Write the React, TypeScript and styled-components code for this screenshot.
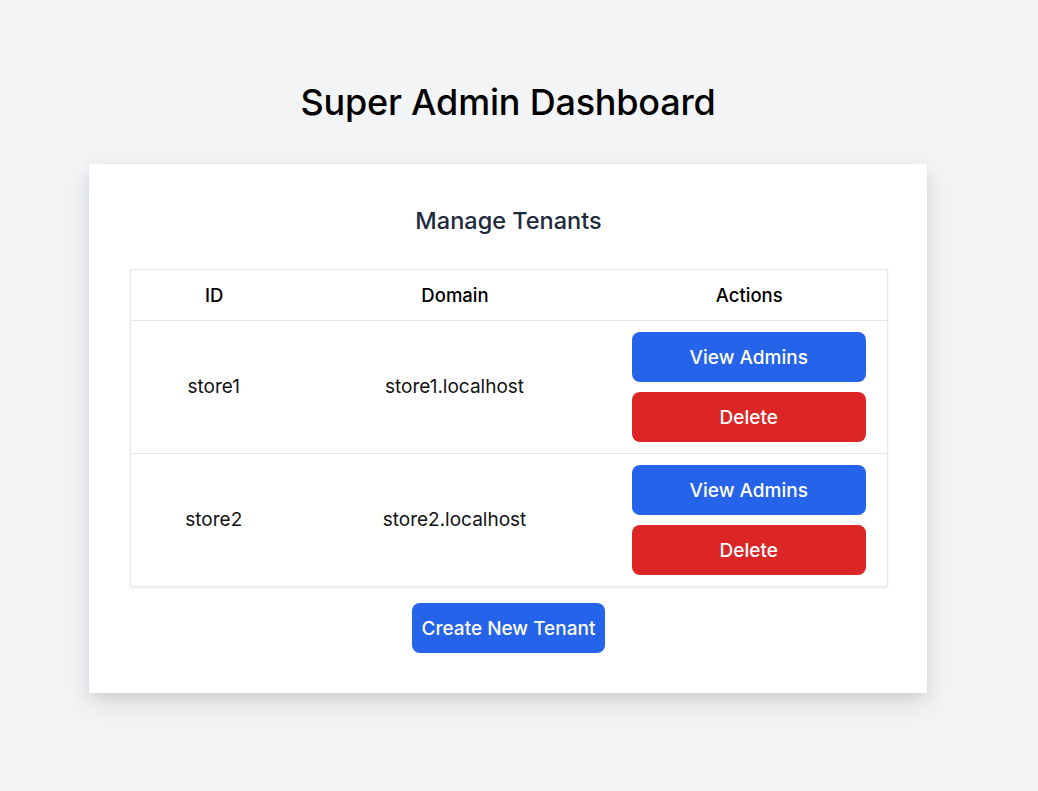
import React, {FC} from 'react';
import styled, {createGlobalStyle} from 'styled-components';

const GlobalStyle = createGlobalStyle`
    html, body {
        margin: 0;
        padding: 0;
        background: #f3f4f6;
        font-family: Inter, "Noto Sans", sans-serif;
    }
`;

const Page = styled.div`
    min-height: 791px;
    display: flex;
    flex-direction: column;
    align-items: center;
    padding: 78px 22px 0 0;
    box-sizing: border-box;
`;

const Title = styled.h1`
    margin: 0 0 38px;
    font-size: 36px;
    font-weight: 500;
    line-height: 48px;
    color: #000;
    letter-spacing: -0.2px;
`;

const Card = styled.div`
    width: 838px;
    box-sizing: border-box;
    background: #fff;
    padding: 40px 40px 40px 41px;
    box-shadow: 0 10px 25px rgba(0, 0, 0, 0.12), 0 4px 10px rgba(0, 0, 0, 0.05);
    display: flex;
    flex-direction: column;
    align-items: center;
`;

const Subtitle = styled.h2`
    margin: 0 0 31px;
    font-size: 23.5px;
    font-weight: 500;
    line-height: 34px;
    color: #1e293b;
`;

const Table = styled.table`
    width: 757px;
    table-layout: fixed;
    border-collapse: collapse;
    border: 1px solid #e5e7eb;
    box-shadow: 0 1px 3px rgba(0, 0, 0, 0.08);
    margin-bottom: 16px;
`;

const Col = styled.col<{$w: number}>`
    width: ${p => p.$w}px;
`;

const Th = styled.th`
    padding: 12px 20px;
    font-size: 18.5px;
    font-weight: 500;
    line-height: 26px;
    color: #000;
    text-align: center;
    border-bottom: 1px solid #e5e7eb;
`;

const Tr = styled.tr`
    border-bottom: 1px solid #e5e7eb;
    &:last-child {
        border-bottom: 0;
    }
`;

const Td = styled.td`
    padding: 11px 21px 11px 20px;
    font-size: 19px;
    line-height: 26px;
    color: #111;
    text-align: center;
    vertical-align: middle;
`;

const Button = styled.button<{$color: string; $block?: boolean}>`
    display: ${p => (p.$block ? 'block' : 'inline-block')};
    width: ${p => (p.$block ? '100%' : 'auto')};
    height: 50px;
    padding: 0 10px;
    border: 0;
    border-radius: 8px;
    background: ${p => p.$color};
    color: #fff;
    font-family: inherit;
    font-size: 19px;
    font-weight: 500;
    cursor: pointer;
    & + & {
        margin-top: 10px;
    }
`;

const tenants = [
    {id: 'store1', domain: 'store1.localhost'},
    {id: 'store2', domain: 'store2.localhost'},
];

const App: FC = () => {
    return (
        <>
            <GlobalStyle />
            <Page>
                <Title>Super Admin Dashboard</Title>
                <Card>
                    <Subtitle>Manage Tenants</Subtitle>
                    <Table>
                        <colgroup>
                            <Col $w={168} />
                            <Col $w={314} />
                            <Col $w={275} />
                        </colgroup>
                        <thead>
                            <tr>
                                <Th>ID</Th>
                                <Th>Domain</Th>
                                <Th>Actions</Th>
                            </tr>
                        </thead>
                        <tbody>
                            {tenants.map(t => (
                                <Tr key={t.id}>
                                    <Td>{t.id}</Td>
                                    <Td>{t.domain}</Td>
                                    <Td>
                                        <Button $color="#2563eb" $block>View Admins</Button>
                                        <Button $color="#dc2626" $block>Delete</Button>
                                    </Td>
                                </Tr>
                            ))}
                        </tbody>
                    </Table>
                    <Button $color="#2563eb">Create New Tenant</Button>
                </Card>
            </Page>
        </>
    )
}

export default App;
